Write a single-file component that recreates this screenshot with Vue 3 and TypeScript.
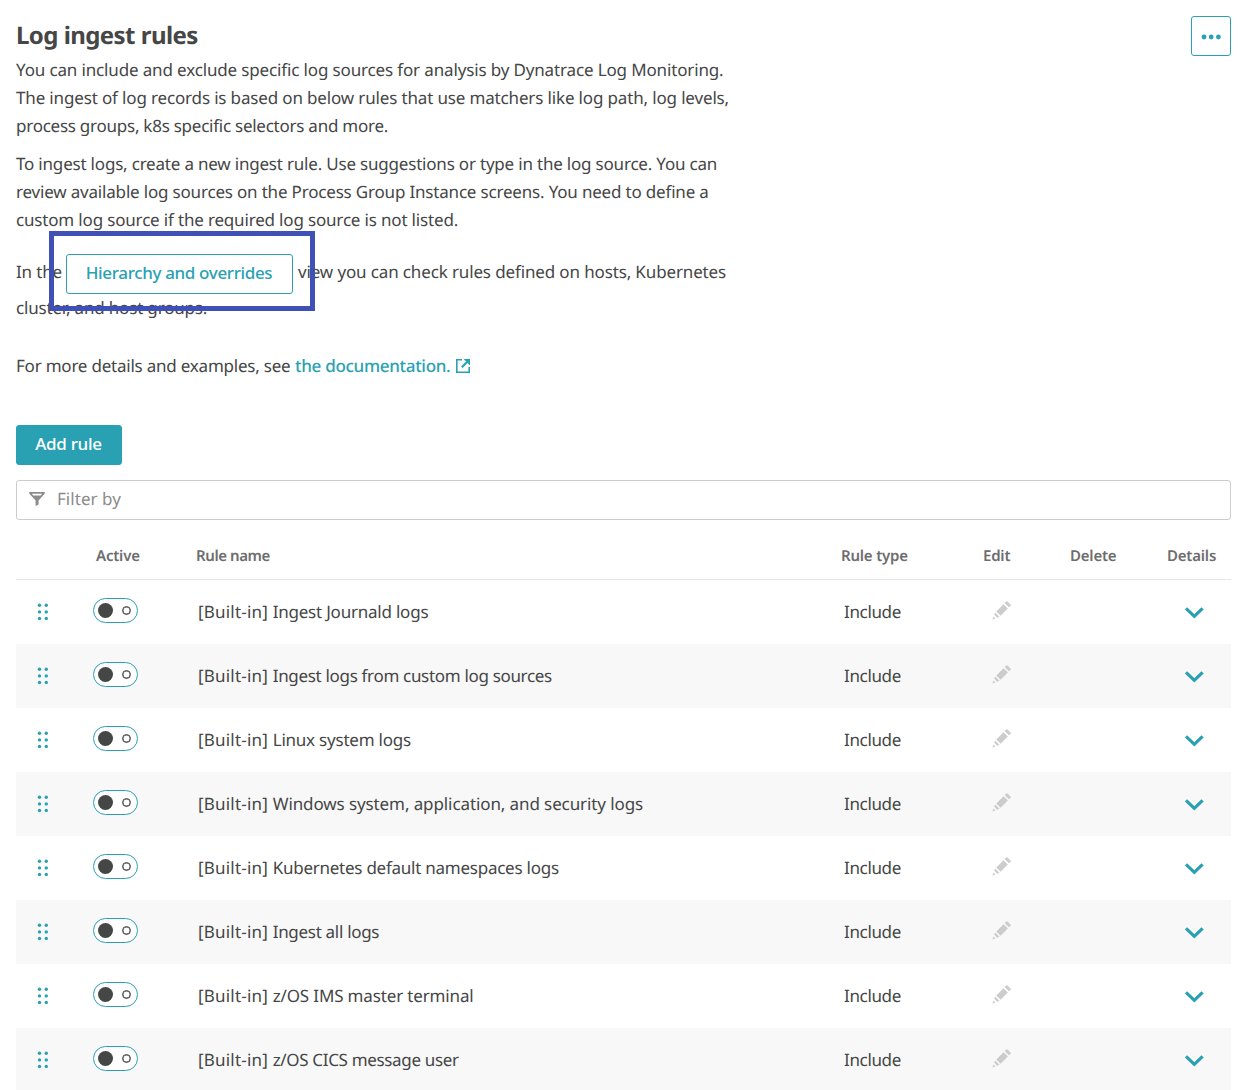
<script setup lang="ts">
interface Line {
  text: string
  tracking: number
}

const intro: Line[][] = [
  [
    { text: 'You can include and exclude specific log sources for analysis by Dynatrace Log Monitoring.', tracking: -0.145 },
    { text: 'The ingest of log records is based on below rules that use matchers like log path, log levels,', tracking: -0.153 },
    { text: 'process groups, k8s specific selectors and more.', tracking: -0.251 },
  ],
  [
    { text: 'To ingest logs, create a new ingest rule. Use suggestions or type in the log source. You can', tracking: -0.198 },
    { text: 'review available log sources on the Process Group Instance screens. You need to define a', tracking: -0.184 },
    { text: 'custom log source if the required log source is not listed.', tracking: -0.172 },
  ],
]

const headers = ['', 'Active', 'Rule name', 'Rule type', 'Edit', 'Delete', 'Details']

const rules: Line[] = [
  { text: 'Ingest Journald logs', tracking: -0.22 },
  { text: 'Ingest logs from custom log sources', tracking: -0.32 },
  { text: 'Linux system logs', tracking: -0.22 },
  { text: 'Windows system, application, and security logs', tracking: -0.1 },
  { text: 'Kubernetes default namespaces logs', tracking: -0.25 },
  { text: 'Ingest all logs', tracking: -0.3 },
  { text: 'z/OS IMS master terminal', tracking: -0.15 },
  { text: 'z/OS CICS message user', tracking: -0.335 },
]
</script>

<template>
  <main class="page">
    <header class="top">
      <h1>Log ingest rules</h1>
      <button class="more" aria-label="More">
        <svg width="20" height="7" viewBox="0 0 20 7"><circle cx="3" cy="4" r="2.4" /><circle cx="10.2" cy="4" r="2.4" /><circle cx="17.4" cy="4" r="2.4" /></svg>
      </button>
    </header>

    <p v-for="(para, i) in intro" :key="i" class="para">
      <span v-for="line in para" :key="line.text" class="line" :style="{ letterSpacing: line.tracking + 'px' }">{{ line.text }}</span>
    </p>

    <div class="hierarchy">
      <div class="hierarchy-row">
        <span class="in-the">In the</span>
        <span class="spot"><button class="outline">Hierarchy and overrides</button></span>
        <span class="view">view you can check rules defined on hosts, Kubernetes</span>
      </div>
      <span class="line cluster">cluster, and host groups.</span>
    </div>

    <div class="docs">
      <span class="docs-text">For more details and examples, see</span>
      <a class="link">the documentation.</a>
      <svg class="ext" width="14" height="14" viewBox="0 0 14 14">
        <path d="M6 .8H.8v12.4h12.4V8" fill="none" stroke="currentColor" stroke-width="1.6" />
        <path d="M5.8 8.2 11 3" fill="none" stroke="currentColor" stroke-width="2.2" />
        <path d="M7.6 0H14v6.4z" fill="currentColor" />
      </svg>
    </div>

    <button class="add">Add rule</button>

    <div class="filter">
      <svg width="16" height="14" viewBox="0 0 16 14">
        <path fill-rule="evenodd" d="M.2 0h15.6v1.4L9.6 8.6v4L6.6 14V8.6L.2 1.4zM2.8 1.7l1.4 1.9h7.6l1.4-1.9z" fill="#8c8c8c" />
      </svg>
      <span>Filter by</span>
    </div>

    <section class="table">
      <div class="grid head">
        <span v-for="h in headers" :key="h">{{ h }}</span>
      </div>
      <div v-for="rule in rules" :key="rule.text" class="grid row">
        <div class="drag">
          <svg width="12" height="18" viewBox="0 0 12 18">
            <circle v-for="n in 6" :key="n" :cx="n % 2 ? 2.5 : 9.3" :cy="2.3 + Math.floor((n - 1) / 2) * 6.6" r="1.7" />
          </svg>
        </div>
        <div class="active"><span class="toggle"><i class="knob"></i><i class="ring"></i></span></div>
        <div class="name">
          <span class="prefix">[Built-in] </span><span :style="{ letterSpacing: rule.tracking + 'px' }">{{ rule.text }}</span>
        </div>
        <div class="type">Include</div>
        <div class="edit">
          <svg width="19" height="19" viewBox="0 0 20 20" fill="#ccc">
            <path d="M0.4 19.6 1.5 16.3 3.7 18.5z" />
            <path d="M2.4 14.6 3.3 12.1 7.9 16.7 5.4 17.6z" />
            <path d="M4.5 11 12.2 3.3 16.7 7.8 9 15.5z" />
            <path d="M13.3 2.2 15.1.4Q15.7 0 16.3.5L19.5 3.7Q20 4.3 19.6 4.9L17.8 6.7z" />
          </svg>
        </div>
        <div></div>
        <div class="details">
          <svg width="20" height="12" viewBox="0 0 20 12"><path d="M2 1.4 10.3 9.4 18.6 1.4" fill="none" stroke="currentColor" stroke-width="3.2" /></svg>
        </div>
      </div>
    </section>
  </main>
</template>

<style>
body {
  background: #fff;
  overflow: hidden;
}
</style>

<style scoped>
.page {
  box-sizing: border-box;
  height: 1090px;
  overflow: hidden;
  padding: 16px 15px 0 16px;
  font: 17px/28px "Noto Sans", "Open Sans", sans-serif;
  color: #454646;
  text-rendering: geometricPrecision;
  white-space: nowrap;
}
.top {
  display: flex;
  justify-content: space-between;
  height: 40px;
}
h1 {
  margin: 0;
  font-size: 24px;
  line-height: 39px;
  font-weight: 700;
  letter-spacing: -0.6px;
  word-spacing: 0.3px;
}
button {
  box-sizing: border-box;
  height: 40px;
  padding: 0 19px;
  border: 1px solid #2aa1b3;
  border-radius: 3px;
  background: #fff;
  color: #2aa1b3;
  font: 500 17px/28px "Noto Sans", "Open Sans", sans-serif;
  letter-spacing: -0.35px;
}
.more {
  display: flex;
  align-items: center;
  justify-content: center;
  width: 40px;
  padding: 0;
  fill: #2aa1b3;
}
.para {
  margin: 0 0 10px;
}
.line {
  display: block;
}
.hierarchy {
  margin-top: 20px;
}
.hierarchy-row {
  display: flex;
  height: 40px;
}
.in-the {
  width: 50px;
  line-height: 35px;
  letter-spacing: -0.15px;
}
.spot {
  position: relative;
  width: 227px;
  margin-right: 5px;
}
.spot::after {
  content: "";
  position: absolute;
  left: -17px;
  top: -23px;
  width: 256px;
  height: 70px;
  border: 5px solid #3f51b5;
}
.outline {
  display: block;
  width: 227px;
  padding: 0 1px 2px 0;
}
.view {
  line-height: 35px;
  letter-spacing: -0.135px;
}
.cluster {
  letter-spacing: -0.18px;
}
.docs {
  display: flex;
  align-items: center;
  height: 28px;
  margin-top: 30px;
}
.docs-text {
  width: 279px;
  letter-spacing: -0.22px;
}
.link {
  width: 161px;
  color: #2aa1b3;
  font-weight: 500;
  letter-spacing: -0.3px;
}
.ext {
  color: #2aa1b3;
}
.add {
  display: block;
  width: 106px;
  margin-top: 45px;
  padding: 0 1px 2px 0;
  background: #2aa1b3;
  color: #fff;
  letter-spacing: -0.3px;
}
.filter {
  box-sizing: border-box;
  display: flex;
  align-items: center;
  gap: 12px;
  height: 40px;
  margin-top: 15px;
  padding: 0 12px 2px;
  border: 1px solid #ccc;
  border-radius: 3px;
  color: #8c8c8c;
  letter-spacing: 0.05px;
}
.grid {
  display: grid;
  grid-template-columns: 80px 100px 645px 142px 87px 97px 1fr;
}
.head {
  box-sizing: border-box;
  height: 60px;
  padding-top: 22px;
  border-bottom: 1px solid #e6e6e6;
  color: #6d6d6d;
  font-size: 15px;
  font-weight: 600;
  letter-spacing: -0.2px;
}
.head span:nth-child(3) {
  letter-spacing: -0.42px;
}
.row {
  height: 64px;
  align-items: center;
}
.row:nth-child(odd) {
  background: #f8f8f8;
}
.drag {
  display: flex;
  padding-left: 21px;
  fill: #2aa1b3;
}
.active {
  display: flex;
  margin: 0 0 3px -3px;
}
.toggle {
  box-sizing: border-box;
  display: flex;
  align-items: center;
  justify-content: space-between;
  width: 45px;
  height: 25px;
  padding: 0 6px 0 4px;
  border: 1px solid #2aa1b3;
  border-radius: 13px;
  background: #fff;
}
.knob {
  width: 15px;
  height: 15px;
  border-radius: 50%;
  background: #454646;
}
.ring {
  box-sizing: border-box;
  width: 9px;
  height: 9px;
  border: 1.5px solid #454646;
  border-radius: 50%;
  box-shadow: inset 0 0 0 0.5px #454646;
}
.name {
  display: flex;
  padding-left: 2px;
}
.prefix {
  width: 74.7px;
  letter-spacing: 0.2px;
}
.type {
  padding-left: 3px;
  letter-spacing: -0.35px;
}
.edit {
  display: flex;
  padding: 0 0 3px 9px;
}
.details {
  display: flex;
  padding: 2px 0 0 17px;
  color: #2aa1b3;
}
</style>
